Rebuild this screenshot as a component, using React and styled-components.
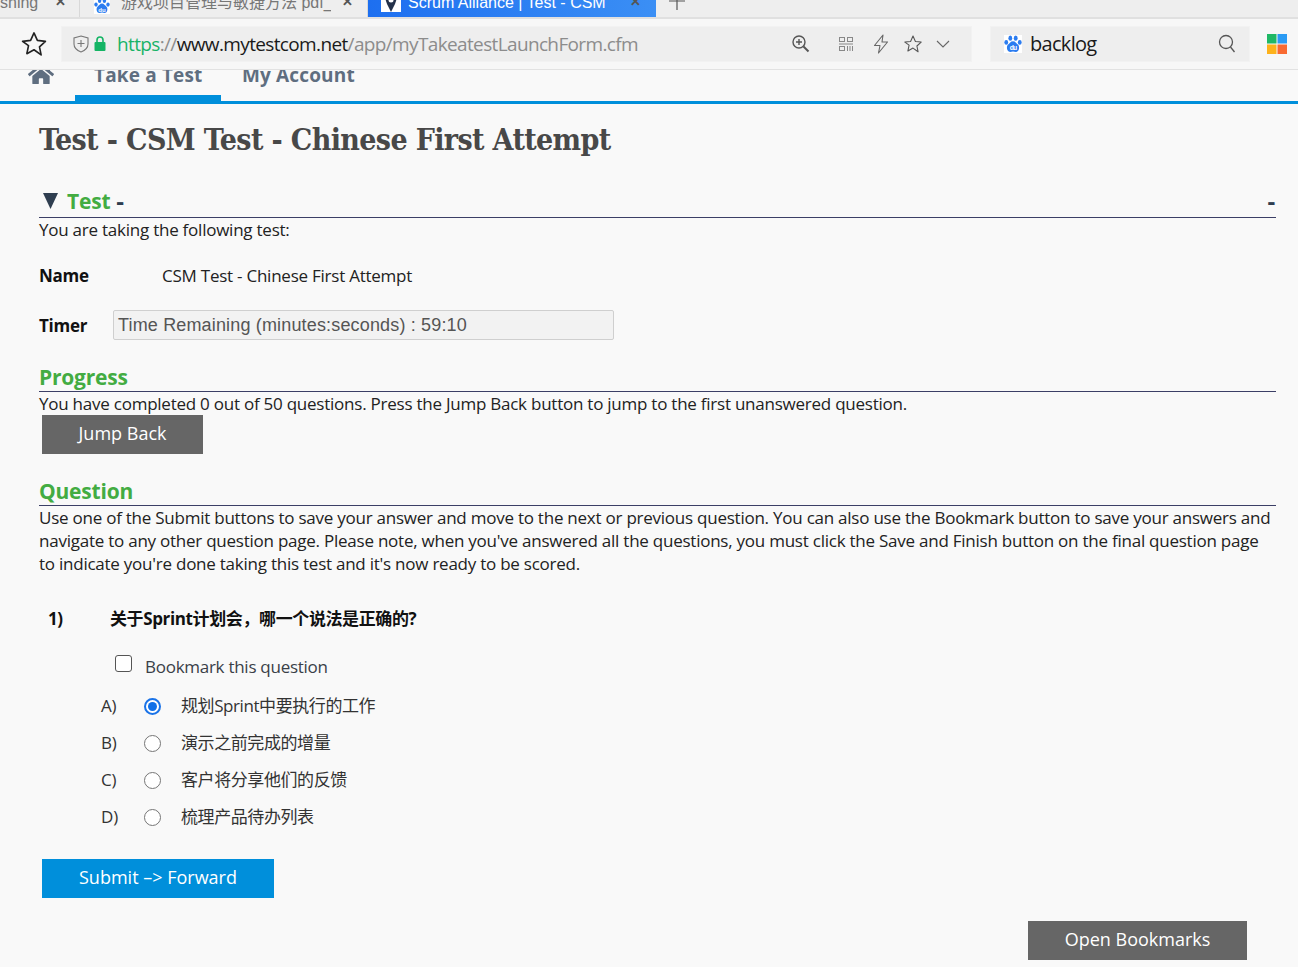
import React from "react";
import styled, { createGlobalStyle } from "styled-components";
import { FaHome } from "react-icons/fa";

const sans = `"Open Sans", "Noto Sans CJK SC", sans-serif`;

const Global = createGlobalStyle`
  html, body { margin: 0; padding: 0; background: #f9f9f9; }
  body { font-family: ${sans}; overflow: hidden; }
  * { box-sizing: border-box; }
`;

const Page = styled.div`
  width: 1298px;
  height: 967px;
  overflow: hidden;
  background: #f9f9f9;
`;

const TabBar = styled.div`
  height: 19px;
  background: #eeeeee;
  border-bottom: 2px solid #e0e0e0;
  display: flex;
  align-items: flex-end;
  overflow: hidden;
  position: relative;
`;

const Tab = styled.div`
  flex: none;
  width: ${(p) => p.$w}px;
  height: 19px;
  display: flex;
  align-items: flex-end;
  background: ${(p) => (p.$active ? "linear-gradient(90deg,#1d6ff0,#3b8ff5)" : "transparent")};
  color: ${(p) => (p.$active ? "#ffffff" : "#777777")};
  border-right: ${(p) => (p.$sep ? "1px solid #d8d8d8" : "none")};
  font-family: "Liberation Sans", "Noto Sans CJK SC", sans-serif;
  font-size: 16px;
  line-height: 19px;
  white-space: nowrap;
  overflow: hidden;
  position: relative;
`;

const TabLabel = styled.span`
  position: relative;
  top: -5px;
  margin-left: ${(p) => p.$ml || 0}px;
  width: ${(p) => p.$w}px;
  overflow: hidden;
  flex: none;
`;

const TabClose = styled.span`
  position: relative;
  top: -6px;
  margin-left: ${(p) => p.$ml || 0}px;
  font-size: 13px;
  font-weight: 700;
  color: ${(p) => (p.$active ? "#fff" : "#555")};
`;

const TabIcon = styled.span`
  display: inline-flex;
  flex: none;
  position: relative;
  top: -3px;
  margin-left: 14px;
`;

const NewTab = styled.span`
  display: inline-flex;
  flex: none;
  align-self: flex-end;
  margin: 0 0 7px 11px;
`;

const Toolbar = styled.div`
  height: 51px;
  background: #f7f7f7;
  border-bottom: 1px solid #e2e2e2;
  display: flex;
  align-items: center;
  padding: 0 0 1px 20px;
`;

const UrlBox = styled.div`
  width: 909px;
  height: 34px;
  margin-left: 14px;
  background: #eeeeee;
  box-shadow: 0 0 0 1px #f2f2f2;
  display: flex;
  align-items: center;
  padding-left: 11px;
`;

const Url = styled.div`
  margin-left: 11px;
  width: 674px;
  font-family: "Open Sans", sans-serif;
  font-size: 19px;
  letter-spacing: -0.64px;
  color: #8c8c8c;
  white-space: nowrap;
`;

const Green = styled.span`
  color: #18b368;
`;
const Dark = styled.span`
  color: #1a1a1a;
`;

const IconSlot = styled.span`
  display: inline-flex;
  margin-left: ${(p) => p.$ml || 0}px;
  flex: none;
`;

const SearchBox = styled.div`
  width: 258px;
  height: 34px;
  margin-left: 20px;
  background: #eeeeee;
  box-shadow: 0 0 0 1px #f2f2f2;
  display: flex;
  align-items: center;
  padding-left: 13px;
  font-family: "Open Sans", sans-serif;
  font-size: 20px;
  letter-spacing: -0.7px;
  color: #1a1a1a;
`;

const SearchText = styled.span`
  margin-left: 8px;
  width: 180px;
`;

const Nav = styled.nav`
  height: 31px;
  display: flex;
  align-items: flex-end;
  overflow: hidden;
  padding-left: 28px;
`;

const NavHome = styled.span`
  display: inline-flex;
  align-self: flex-end;
  margin-bottom: 14px;
  flex: none;
  color: #5f6e80;
`;

const NavItem = styled.div`
  flex: none;
  width: ${(p) => p.$w}px;
  margin-left: ${(p) => p.$ml || 0}px;
  height: 37px;
  border-bottom: 6px solid ${(p) => (p.$active ? "#008fdb" : "transparent")};
  padding-left: ${(p) => p.$pl || 0}px;
  font-size: 19px;
  font-weight: 700;
  line-height: 22px;
  letter-spacing: 0.15px;
  color: #5f6e80;
  white-space: nowrap;
`;

const NavRule = styled.div`
  height: 3px;
  background: #008fdb;
`;

const Main = styled.main`
  padding: 0 22px 0 39px;
  color: #222;
  font-size: 17px;
  line-height: 23px;
  letter-spacing: -0.24px;
`;

const Title = styled.h1`
  margin: 15px 0 0;
  height: 42px;
  font-family: "DejaVu Serif Condensed", "DejaVu Serif", serif;
  font-size: 30px;
  line-height: 42px;
  font-weight: 700;
  letter-spacing: -0.63px;
  color: #484848;
`;

const SectionHead = styled.div`
  margin-top: ${(p) => p.$mt}px;
  height: 27px;
  padding-bottom: ${(p) => p.$pb || 0}px;
  border-bottom: 1px solid #3b3f66;
  display: flex;
  align-items: flex-end;
  justify-content: space-between;
  font-size: 21px;
  font-weight: 700;
  line-height: 28px;
  letter-spacing: -0.2px;
  color: #43ac42;
`;

const HeadLeft = styled.span`
  display: inline-flex;
  align-items: center;
`;

const Arrow = styled.span`
  width: 15px;
  height: 16px;
  margin: 0 9px 0 4px;
  background: #2f3e50;
  clip-path: polygon(0 0, 100% 0, 50% 100%);
`;

const Dash = styled.span`
  color: #2f3e50;
  font-size: 24px;
  margin-left: 6px;
  margin-right: ${(p) => p.$mr || 0}px;
`;

const Para = styled.p`
  margin: 0;
`;

const InfoRow = styled.div`
  margin-top: ${(p) => p.$mt}px;
  display: flex;
  align-items: center;
  height: ${(p) => p.$h || 23}px;
`;

const InfoLabel = styled.span`
  width: ${(p) => p.$w}px;
  flex: none;
  font-weight: 700;
  color: #111;
`;

const TimerBox = styled.div`
  width: 501px;
  height: 30px;
  background: #f2f2f2;
  border: 1px solid #cfcfcf;
  border-radius: 2px;
  padding-left: 4px;
  font-family: "Liberation Sans", sans-serif;
  font-size: 18px;
  line-height: 28px;
  letter-spacing: 0.16px;
  color: #555;
`;

const Button = styled.div`
  margin: ${(p) => p.$m};
  width: ${(p) => p.$w}px;
  height: 39px;
  background: ${(p) => p.$bg};
  color: #fff;
  font-size: 18px;
  line-height: 36px;
  text-align: center;
  letter-spacing: 0;
`;

const QuestionRow = styled.div`
  margin-top: 32px;
  padding-left: 9px;
  display: flex;
  font-weight: 700;
  font-size: 17px;
  letter-spacing: -0.38px;
  color: #111;
  height: 23px;
`;

const QNum = styled.span`
  width: 62px;
  flex: none;
`;

const BookmarkRow = styled.div`
  margin-top: 25px;
  padding-left: 76px;
  display: flex;
  align-items: center;
  height: 23px;
  color: #3a3f48;
  letter-spacing: -0.27px;
`;

const Checkbox = styled.span`
  width: 17px;
  height: 17px;
  border: 1px solid #555;
  border-radius: 3px;
  background: #fff;
  margin-top: -6px;
  flex: none;
`;

const BookmarkLabel = styled.span`
  margin-left: 13px;
`;

const OptionList = styled.div`
  margin-top: 17px;
  padding-left: 62px;
  display: grid;
  row-gap: 14px;
  color: #333;
  letter-spacing: -0.2px;
`;

const Option = styled.div`
  display: flex;
  align-items: center;
  height: 23px;
`;

const OptLetter = styled.span`
  width: 43px;
  flex: none;
  padding-bottom: 2px;
`;

const Radio = styled.span`
  width: 17px;
  height: 17px;
  border-radius: 50%;
  flex: none;
  background: #fff;
  border: ${(p) => (p.$on ? "2px solid #1a73e8" : "1px solid #767676")};
  display: flex;
  align-items: center;
  justify-content: center;
  &::after {
    content: "";
    display: ${(p) => (p.$on ? "block" : "none")};
    width: 9px;
    height: 9px;
    border-radius: 50%;
    background: #0f6fe8;
  }
`;

const OptText = styled.span`
  margin-left: 20px;
  font-size: 17px;
  letter-spacing: -0.42px;
  padding-bottom: 2px;
`;

const Right = styled.div`
  display: flex;
  justify-content: flex-end;
  padding-right: 29px;
`;

const Star = ({ s = 18, c = "#555", w = 1.4 }) => (
  <svg width={s} height={s} viewBox="0 0 24 24" fill="none" stroke={c} strokeWidth={w} strokeLinejoin="round">
    <path d="M12 2.5l2.9 6.4 6.9.8-5.1 4.7 1.4 6.9L12 16.9l-6.1 3.4 1.4-6.9L2.2 9.7l6.9-.8z" />
  </svg>
);

const Baidu = ({ s = 16 }) => (
  <svg width={s} height={s} viewBox="0 0 16 16">
    <rect width="16" height="16" fill="#fff" />
    <g fill="#2b7cf0">
      <ellipse cx="5.6" cy="2.8" rx="1.7" ry="2.3" />
      <ellipse cx="10.4" cy="2.8" rx="1.7" ry="2.3" />
      <ellipse cx="2" cy="6.6" rx="1.7" ry="2.1" />
      <ellipse cx="14" cy="6.6" rx="1.7" ry="2.1" />
      <path d="M8 5.5c2.2 0 2.8 2 4.300 3 1.800 1.300 1.500 6.500-1.800 6.500-1 0-1.700-.4-2.500-.4s-1.500.4-2.500.4c-3.300 0-3.600-5.200-1.800-6.500C5.200 7.500 5.800 5.500 8 5.500z" />
    </g>
    <text x="8" y="13.500" fontSize="6" fontWeight="700" fontFamily="Liberation Sans, sans-serif" textAnchor="middle" fill="#fff">du</text>
  </svg>
);

const LogoSlot = styled.span`
  position: absolute;
  left: 13px;
  top: 0;
  display: flex;
`;

const ScrumLogo = () => (
  <LogoSlot>
    <svg width="20" height="14" viewBox="0 0 20 14">
      <rect width="20" height="14" fill="#fff" />
      <path d="M4 0h12l-2 6-4 8-4-8z" fill="#23314a" />
      <circle cx="10" cy="2" r="2.5" fill="#fff" />
    </svg>
  </LogoSlot>
);

export default function App() {
  return (
    <Page>
      <Global />
      <TabBar>
        <Tab $w={80} $sep>
          <TabLabel $ml={0} $w={38}>shing</TabLabel>
          <TabClose $ml={17}>✕</TabClose>
        </Tab>
        <Tab $w={288} $sep>
          <TabIcon>
            <Baidu s={16} />
          </TabIcon>
          <TabLabel $ml={11} $w={210}>游戏项目管理与敏捷方法 pdf_E</TabLabel>
          <TabClose $ml={11}>✕</TabClose>
        </Tab>
        <Tab $w={288} $active>
          <ScrumLogo />
          <TabLabel $ml={40} $w={199}>Scrum Alliance | Test - CSM</TabLabel>
          <TabClose $ml={23}>✕</TabClose>
        </Tab>
        <NewTab>
          <svg width="20" height="12" viewBox="0 0 20 12" fill="none" stroke="#555" strokeWidth="1.2">
            <path d="M10 0v12M2 3h16" />
          </svg>
        </NewTab>
      </TabBar>

      <Toolbar>
        <Star s={28} c="#222" w={1.4} />
        <UrlBox>
          <svg width="16" height="18" viewBox="0 0 16 18" fill="none" stroke="#777" strokeWidth="1.1">
            <path d="M8 1l7 2v6c0 4-3 6.5-7 8-4-1.5-7-4-7-8V3z" />
            <path d="M4.500 8.500h7M8 5v7" />
          </svg>
          <IconSlot $ml={5}>
            <svg width="12" height="15" viewBox="0 0 12 15">
              <path d="M3 6V4a3 3 0 016 0v2" fill="none" stroke="#14b464" strokeWidth="1.6" />
              <rect x="0.5" y="6" width="11" height="9" rx="1" fill="#14b464" />
            </svg>
          </IconSlot>
          <Url>
            <Green>https</Green>://<Dark>www.mytestcom.net</Dark>/app/myTakeatestLaunchForm.cfm
          </Url>
          <IconSlot>
            <svg width="20" height="20" viewBox="0 0 20 20" fill="none" stroke="#555" strokeWidth="1.4">
              <circle cx="8" cy="8" r="6" />
              <path d="M8 5v6M5 8h6" />
              <path d="M12.500 12.500l5 5" strokeWidth="2" />
            </svg>
          </IconSlot>
          <IconSlot $ml={27}>
            <svg width="16" height="16" viewBox="0 0 16 16" fill="none" stroke="#888" strokeWidth="1">
              <rect x="1.5" y="1.5" width="5" height="4" />
              <rect x="9.5" y="1.5" width="5" height="4" />
              <path d="M1 8h14" />
              <rect x="1.5" y="10.5" width="5" height="4" />
              <path d="M9.500 10v5M12 10v5M14.500 10v5" />
            </svg>
          </IconSlot>
          <IconSlot $ml={19}>
            <svg width="16" height="20" viewBox="0 0 16 20" fill="none" stroke="#666" strokeWidth="1.1" strokeLinejoin="round">
              <path d="M10 1L1.500 11.500H7L5.500 19l9-11H9z" />
            </svg>
          </IconSlot>
          <IconSlot $ml={14}>
            <Star s={20} c="#555" w={1.3} />
          </IconSlot>
          <IconSlot $ml={13}>
            <svg width="14" height="8" viewBox="0 0 14 8" fill="none" stroke="#666" strokeWidth="1.1">
              <path d="M1 1l6 6 6-6" />
            </svg>
          </IconSlot>
        </UrlBox>
        <SearchBox>
          <Baidu s={18} />
          <SearchText>backlog</SearchText>
          <IconSlot $ml={8}>
            <svg width="18" height="19" viewBox="0 0 18 19" fill="none" stroke="#555" strokeWidth="1.3">
              <circle cx="8" cy="8" r="6.5" />
              <path d="M12.500 13l4 5" />
            </svg>
          </IconSlot>
        </SearchBox>
        <IconSlot $ml={18}>
          <svg width="20" height="20" viewBox="0 0 20 20">
            <rect x="0" y="0" width="9.5" height="9.5" fill="#1fb866" />
            <rect x="10.5" y="0" width="9.5" height="9.5" fill="#2b9bf4" />
            <rect x="0" y="10.5" width="9.5" height="9.5" fill="#fdb21c" />
            <rect x="10.5" y="10.5" width="9.5" height="9.5" fill="#f96a32" />
          </svg>
        </IconSlot>
      </Toolbar>

      <Nav>
        <NavHome>
          <FaHome size={26} />
        </NavHome>
        <NavItem $w={146} $ml={21} $pl={19} $active>Take a Test</NavItem>
        <NavItem $w={140} $ml={21}>My Account</NavItem>
      </Nav>
      <NavRule />

      <Main>
        <Title>Test - CSM Test - Chinese First Attempt</Title>
        <SectionHead $mt={30} $pb={2}>
          <HeadLeft>
            <Arrow />
            Test
            <Dash>-</Dash>
          </HeadLeft>
          <Dash $mr={1}>-</Dash>
        </SectionHead>
        <Para>You are taking the following test:</Para>
        <InfoRow $mt={23}>
          <InfoLabel $w={123}>Name</InfoLabel>
          CSM Test - Chinese First Attempt
        </InfoRow>
        <InfoRow $mt={23} $h={30}>
          <InfoLabel $w={74}>Timer</InfoLabel>
          <TimerBox>Time Remaining (minutes:seconds) : 59:10</TimerBox>
        </InfoRow>
        <SectionHead $mt={25}>Progress</SectionHead>
        <Para>You have completed 0 out of 50 questions. Press the Jump Back button to jump to the first unanswered question.</Para>
        <Button $m="0 0 0 3px" $w={161} $bg="#666666">Jump Back</Button>
        <SectionHead $mt={25}>Question</SectionHead>
        <Para>
          Use one of the Submit buttons to save your answer and move to the next or previous question. You can also use the Bookmark button to save your answers and navigate to any other question page. Please note, when you've answered all the questions, you must click the Save and Finish button on the final question page to indicate you're done taking this test and it's now ready to be scored.
        </Para>
        <QuestionRow>
          <QNum>1)</QNum>
          <span>关于Sprint计划会，哪一个说法是正确的?</span>
        </QuestionRow>
        <BookmarkRow>
          <Checkbox />
          <BookmarkLabel>Bookmark this question</BookmarkLabel>
        </BookmarkRow>
        <OptionList>
          <Option><OptLetter>A)</OptLetter><Radio $on /><OptText>规划Sprint中要执行的工作</OptText></Option>
          <Option><OptLetter>B)</OptLetter><Radio /><OptText>演示之前完成的增量</OptText></Option>
          <Option><OptLetter>C)</OptLetter><Radio /><OptText>客户将分享他们的反馈</OptText></Option>
          <Option><OptLetter>D)</OptLetter><Radio /><OptText>梳理产品待办列表</OptText></Option>
        </OptionList>
        <Button $m="30px 0 0 3px" $w={232} $bg="#008fdb">Submit –&gt; Forward</Button>
        <Right>
          <Button $m="23px 0 0 0" $w={219} $bg="#666666">Open Bookmarks</Button>
        </Right>
      </Main>
    </Page>
  );
}
